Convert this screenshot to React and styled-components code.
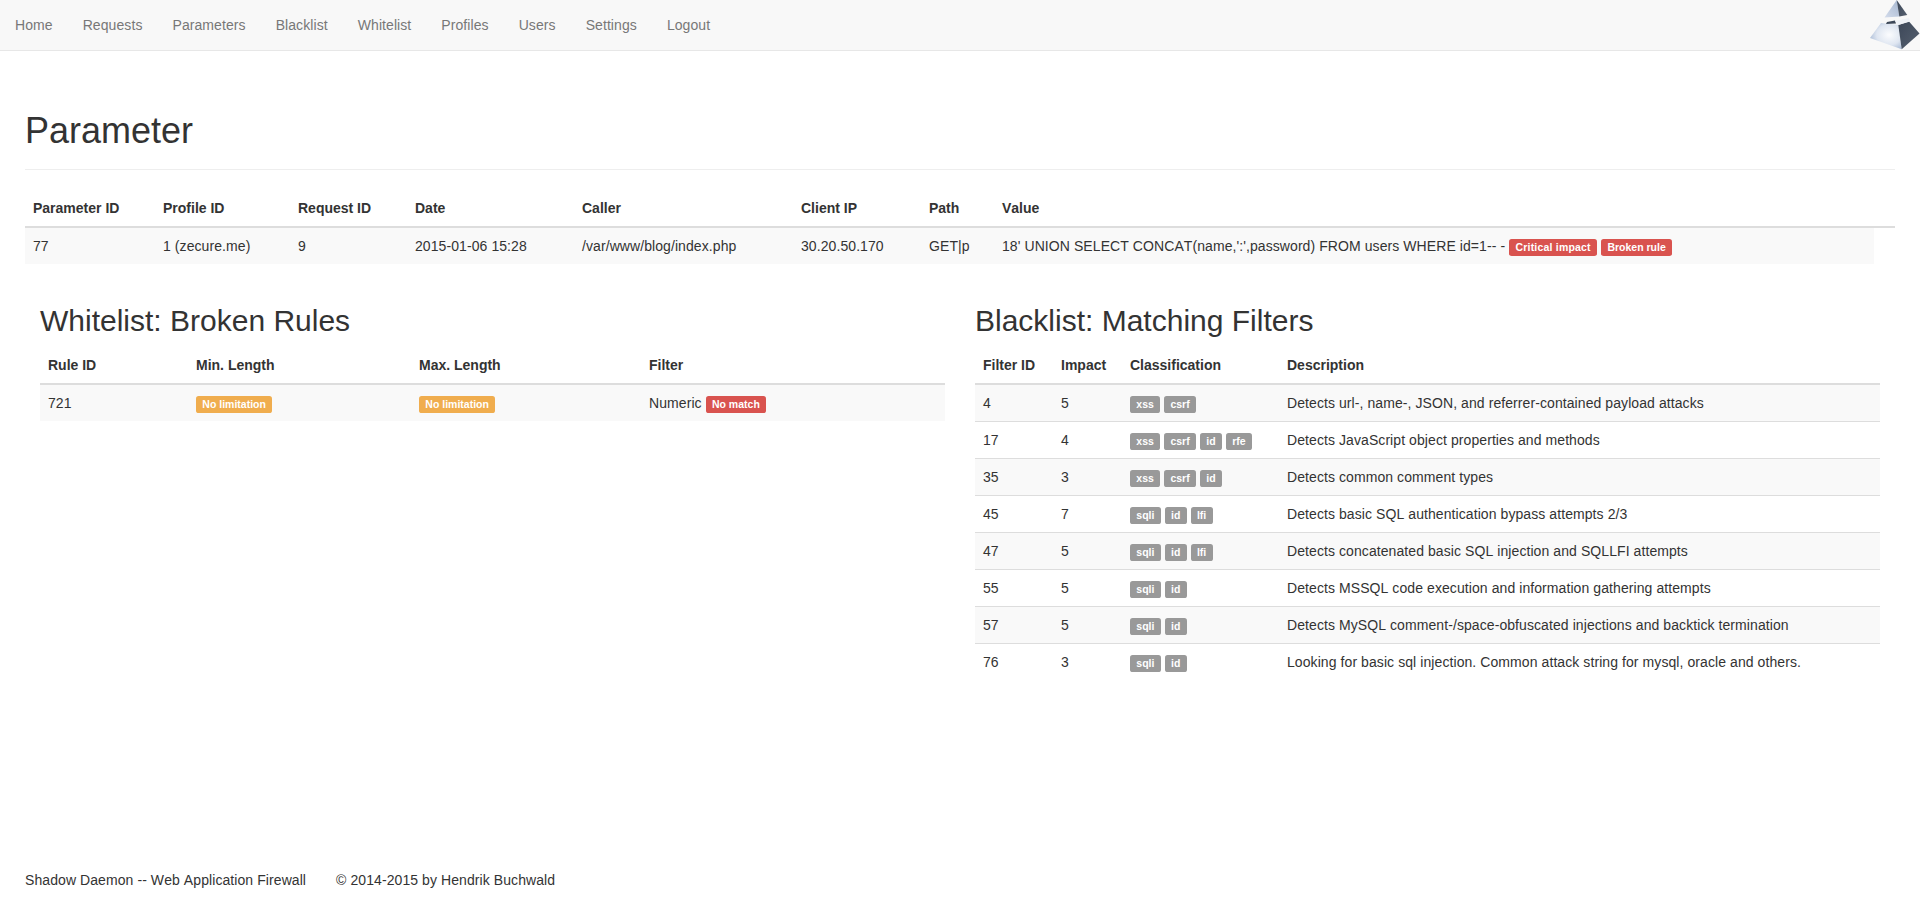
import React from "react"
import styled, { createGlobalStyle } from "styled-components"

const GlobalStyle = createGlobalStyle`
  * {
    box-sizing: border-box;
  }
  html, body {
    margin: 0;
    padding: 0;
  }
  body {
    font-family: "Liberation Sans", Arial, sans-serif;
    font-size: 14px;
    line-height: 1.42857143;
    color: #333;
    background: #fff;
    font-kerning: none;
    letter-spacing: 0.08px;
  }
`

const Page = styled.div`
  min-height: 100vh;
  display: flex;
  flex-direction: column;
`

const Navbar = styled.nav`
  height: 51px;
  background: #f8f8f8;
  border-bottom: 1px solid #e7e7e7;
  display: flex;
  justify-content: space-between;
`

const NavList = styled.div`
  display: flex;
`

const NavLink = styled.a`
  padding: 15px;
  line-height: 20px;
  color: #777;
  text-decoration: none;
`

const Logo = styled.svg`
  width: 50px;
  height: 50px;
  display: block;
`

const Content = styled.main`
  padding: 60px 25px 0;
`

const PageHeader = styled.div`
  padding-bottom: 8px;
  margin-bottom: 20px;
  border-bottom: 1px solid #eee;
`

const Title = styled.h1`
  margin: 0 0 10px;
  font-size: 36px;
  font-weight: 500;
  line-height: 1.1;
  letter-spacing: 0;
`

const Columns = styled.div`
  display: grid;
  grid-template-columns: 1fr 1fr;
`

const Column = styled.section`
  padding: 0 15px;
`

const SubTitle = styled.h2`
  margin: 20px 0 10px;
  font-size: 30px;
  font-weight: 500;
  line-height: 1.1;
  letter-spacing: 0;
`

const Table = styled.table`
  width: 100%;
  border-collapse: collapse;
  border-spacing: 0;
  margin-bottom: 20px;
`

const Th = styled.th`
  padding: 8px;
  text-align: left;
  vertical-align: bottom;
  font-weight: 700;
  line-height: 20px;
  letter-spacing: 0;
  border-bottom: 2px solid #ddd;
  ${({ $width }) => $width && `width: ${$width}px;`}
`

const Row = styled.tr`
  &:nth-child(odd) {
    background: #f9f9f9;
  }
`

const Td = styled.td`
  padding: 8px;
  vertical-align: top;
  line-height: 20px;
  border-top: 1px solid #ddd;
`

const tones = {
  danger: "#d9534f",
  warning: "#f0ad4e",
  neutral: "#999",
}

const Label = styled.span`
  display: inline;
  padding: 0.2em 0.6em 0.3em;
  font-size: 75%;
  font-weight: 700;
  line-height: 1;
  letter-spacing: ${({ $wide }) => ($wide ? "0.2px" : "0")};
  color: #fff;
  text-align: center;
  white-space: nowrap;
  vertical-align: baseline;
  border-radius: 0.25em;
  background: ${({ $tone }) => tones[$tone]};
`

const Footer = styled.footer`
  margin-top: auto;
  padding: 0 25px 10px;
  display: flex;
  gap: 30px;
`

const navItems = ["Home", "Requests", "Parameters", "Blacklist", "Whitelist", "Profiles", "Users", "Settings", "Logout"]

const filters = [
  [4, 5, ["xss", "csrf"], "Detects url-, name-, JSON, and referrer-contained payload attacks"],
  [17, 4, ["xss", "csrf", "id", "rfe"], "Detects JavaScript object properties and methods"],
  [35, 3, ["xss", "csrf", "id"], "Detects common comment types"],
  [45, 7, ["sqli", "id", "lfi"], "Detects basic SQL authentication bypass attempts 2/3"],
  [47, 5, ["sqli", "id", "lfi"], "Detects concatenated basic SQL injection and SQLLFI attempts"],
  [55, 5, ["sqli", "id"], "Detects MSSQL code execution and information gathering attempts"],
  [57, 5, ["sqli", "id"], "Detects MySQL comment-/space-obfuscated injections and backtick termination"],
  [76, 3, ["sqli", "id"], "Looking for basic sql injection. Common attack string for mysql, oracle and others."],
]

function PyramidLogo() {
  return (
    <Logo viewBox="0 0 50 50">
      <defs>
        <radialGradient id="lowerLight" cx="0.6" cy="0.45" r="0.7">
          <stop offset="0" stopColor="#fbfcfe" />
          <stop offset="0.55" stopColor="#dfe6f1" />
          <stop offset="1" stopColor="#9fb2d0" />
        </radialGradient>
        <linearGradient id="upperLight" x1="0" y1="1" x2="1" y2="0">
          <stop offset="0" stopColor="#d4dceb" />
          <stop offset="1" stopColor="#a5b6d0" />
        </linearGradient>
        <linearGradient id="darkFace" x1="0" y1="0" x2="1" y2="1">
          <stop offset="0" stopColor="#3c4758" />
          <stop offset="1" stopColor="#56606f" />
        </linearGradient>
      </defs>
      <polygon points="26.7,0 14.5,17.5 29.3,16.5" fill="url(#upperLight)" />
      <polygon points="26.7,0 29.3,16.5 37.3,15" fill="url(#darkFace)" />
      <polygon points="11,23 0,38 31.7,49.3 28.3,25" fill="url(#lowerLight)" />
      <polygon points="28.3,25 31.7,49.3 49.5,33.5 39,21.5" fill="url(#darkFace)" />
      <polygon points="17,22 25,20.5 26,23.5 16,24" fill="#3c4758" />
      <polygon points="25,21 39,18 40,21.5 28.3,25" fill="#eef1f6" />
    </Logo>
  )
}

export default function App() {
  return (
    <Page>
      <GlobalStyle />
      <Navbar>
        <NavList>
          {navItems.map((item) => (
            <NavLink key={item} href="#">{item}</NavLink>
          ))}
        </NavList>
        <PyramidLogo />
      </Navbar>
      <Content>
        <PageHeader>
          <Title>Parameter</Title>
        </PageHeader>
        <Table>
          <thead>
            <tr>
              <Th $width={130}>Parameter ID</Th>
              <Th $width={135}>Profile ID</Th>
              <Th $width={117}>Request ID</Th>
              <Th $width={167}>Date</Th>
              <Th $width={219}>Caller</Th>
              <Th $width={128}>Client IP</Th>
              <Th $width={73}>Path</Th>
              <Th>Value</Th>
              <Th></Th>
            </tr>
          </thead>
          <tbody>
            <Row>
              <Td>77</Td>
              <Td>1 (zecure.me)</Td>
              <Td>9</Td>
              <Td>2015-01-06 15:28</Td>
              <Td>/var/www/blog/index.php</Td>
              <Td>30.20.50.170</Td>
              <Td>GET|p</Td>
              <Td>
                18' UNION SELECT CONCAT(name,':',password) FROM users WHERE id=1-- -{" "}
                <Label $tone="danger" $wide>Critical impact</Label>{" "}
                <Label $tone="danger">Broken rule</Label>
              </Td>
            </Row>
          </tbody>
        </Table>
        <Columns>
          <Column>
            <SubTitle>Whitelist: Broken Rules</SubTitle>
            <Table>
              <thead>
                <tr>
                  <Th $width={148}>Rule ID</Th>
                  <Th $width={223}>Min. Length</Th>
                  <Th $width={230}>Max. Length</Th>
                  <Th>Filter</Th>
                </tr>
              </thead>
              <tbody>
                <Row>
                  <Td>721</Td>
                  <Td><Label $tone="warning">No limitation</Label></Td>
                  <Td><Label $tone="warning">No limitation</Label></Td>
                  <Td>Numeric <Label $tone="danger">No match</Label></Td>
                </Row>
              </tbody>
            </Table>
          </Column>
          <Column>
            <SubTitle>Blacklist: Matching Filters</SubTitle>
            <Table>
              <thead>
                <tr>
                  <Th $width={78}>Filter ID</Th>
                  <Th $width={69}>Impact</Th>
                  <Th $width={157}>Classification</Th>
                  <Th>Description</Th>
                </tr>
              </thead>
              <tbody>
                {filters.map(([id, impact, tags, description]) => (
                  <Row key={id}>
                    <Td>{id}</Td>
                    <Td>{impact}</Td>
                    <Td>
                      {tags.map((tag) => (
                        <React.Fragment key={tag}>
                          <Label $tone="neutral">{tag}</Label>{" "}
                        </React.Fragment>
                      ))}
                    </Td>
                    <Td>{description}</Td>
                  </Row>
                ))}
              </tbody>
            </Table>
          </Column>
        </Columns>
      </Content>
      <Footer>
        <span>Shadow Daemon -- Web Application Firewall</span>
        <span>© 2014-2015 by Hendrik Buchwald</span>
      </Footer>
    </Page>
  )
}
